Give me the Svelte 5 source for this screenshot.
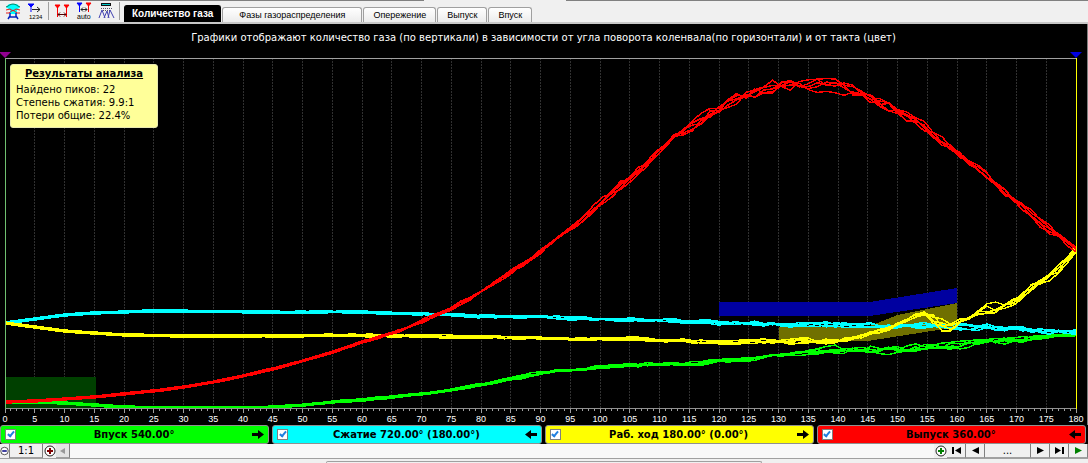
<script>
	const tabs = ["Количество газа", "Фазы газораспределения", "Опережение", "Выпуск", "Впуск"];
	let active = $state(0);

	let strokes = $state([
		{ label: "Впуск 540.00°", color: "#00ff00", dir: "right", on: true },
		{ label: "Сжатие 720.00° (180.00°)", color: "#00ffff", dir: "left", on: true },
		{ label: "Раб. ход 180.00° (0.00°)", color: "#ffff00", dir: "right", on: true },
		{ label: "Выпуск 360.00°", color: "#ff0000", dir: "left", on: true }
	]);

	// [crank angle, height on the 351-unit plot]
	const curves = [
		[[0, 344], [5, 344], [10, 345], [15, 347], [20, 349], [25, 350], [40, 350], [45, 349], [50, 347], [55, 344], [60, 342], [65, 339], [70, 336], [75, 332], [80, 327], [85, 321], [90, 315], [95, 312], [100, 309], [105, 307], [110, 306], [117, 305], [120, 302], [125, 301], [130, 297], [135, 294], [140, 292], [145, 292], [150, 291], [155, 289], [160, 287], [165, 284], [170, 282], [175, 278], [180, 276]],
		[[0, 265], [5, 261], [10, 257], [15, 255], [20, 254], [25, 253], [45, 254], [58, 254], [70, 256], [80, 258], [90, 259], [100, 261], [110, 262], [117, 264], [120, 265], [125, 265], [130, 266], [140, 267], [150, 268], [160, 268], [165, 269], [170, 270], [175, 273], [180, 274]],
		[[0, 265], [5, 269], [10, 273], [15, 275], [20, 277], [30, 278], [45, 278], [58, 277], [70, 278], [80, 279], [90, 280], [100, 281], [110, 282], [120, 284], [125, 283], [130, 284], [135, 283], [140, 283], [145, 277], [150, 266], [154, 255], [156, 261], [158, 266], [160, 264], [162, 259], [164, 251], [167, 249], [169, 244], [171, 237], [173, 229], [175, 221], [177, 211], [179, 198], [180, 191]],
		[[0, 344], [5, 343], [10, 341], [15, 339], [20, 336], [25, 333], [30, 329], [35, 324], [40, 318], [45, 311], [50, 303], [55, 294], [60, 284], [65, 275], [70, 264], [75, 250], [80, 234], [85, 214], [90, 194], [95, 172], [100, 145], [105, 121], [110, 93], [115, 68], [120, 51], [125, 37], [130, 27], [135, 26], [140, 29], [145, 39], [150, 53], [155, 71], [160, 95], [165, 118], [170, 144], [175, 169], [180, 191]]
	];

	// how far the cycles drift apart at a given angle
	const spread = [
		[[0, 0], [70, 1], [90, 3], [130, 4], [145, 9], [165, 7], [180, 4]],
		[[0, 0], [60, 1], [110, 3], [135, 5], [160, 6], [175, 8], [180, 4]],
		[[0, 0], [60, 1], [110, 4], [138, 6], [148, 6], [154, 5], [157, 20], [160, 10], [170, 13], [180, 8]],
		[[0, 0], [60, 1], [80, 5], [100, 9], [120, 13], [135, 15], [150, 12], [165, 8], [175, 12], [180, 5]]
	];

	function at(points, x) {
		const i = Math.max(1, points.findIndex((p) => p[0] >= x));
		const [x0, y0] = points[i - 1];
		const [x1, y1] = points[i];
		return y0 + ((y1 - y0) * (x - x0)) / (x1 - x0);
	}

	// mulberry32
	function random(seed) {
		return () => {
			seed = (seed + 0x6d2b79f5) | 0;
			let t = Math.imul(seed ^ (seed >>> 15), 1 | seed);
			t = (t + Math.imul(t ^ (t >>> 7), 61 | t)) ^ t;
			return ((t ^ (t >>> 14)) >>> 0) / 4294967296;
		};
	}

	function trace(c, k) {
		const next = random(c * 100 + k + 7);
		const out = [];
		let drift = 0;
		for (let x = 0; x <= 180; x += 1.5) {
			drift = drift * 0.4 + (next() - 0.5) * 0.8;
			const y = at(curves[c], x) + drift * at(spread[c], x) + (k - 2) * 0.5;
			out.push(`${x},${Math.min(350, y).toFixed(1)}`);
		}
		return out.join(" ");
	}

	const degrees = Array.from({ length: 181 }, (_, i) => i);
	const major = degrees.filter((d) => d % 5 === 0);
</script>

<main>
	<header class="toolbar">
		<div class="tools">
			<button aria-label="Форсунка">
				<svg width="18" height="18" viewBox="0 0 18 18">
					<path d="M5 2h8l3 3-3 3v4H6V8L2 5z" fill="#00ffff" />
					<path d="M2 5c3-1 4-3 7-3s4 2 7 3" fill="none" stroke="#008060" />
					<path d="M2 8l4-1 3 2 3-2 4 1M2 11l3 0 4-3 4 3 3 0" fill="none" stroke="#e02020" />
					<path d="M6 11v3l-2 3M12 11v3l2 3M6 15h6" fill="none" stroke="#0020c0" stroke-width="1.5" />
				</svg>
			</button>
			<button aria-label="Нумерация">
				<svg width="18" height="18" viewBox="0 0 18 18">
					<path d="M2 2h6L5 5z" fill="#0000ff" stroke="#0000ff" />
					<path d="M5 4v6" stroke="#0000ff" />
					<path d="M6 7.500h8M11 5l3 2.500-3 2.500" fill="none" stroke="#222" />
					<text x="3" y="17" font-size="6">1234</text>
				</svg>
			</button>
			<i></i>
			<button aria-label="Интервал">
				<svg width="18" height="18" viewBox="0 0 18 18">
					<path d="M2 3h5L4.500 6zM11 3h5l-2.500 3z" fill="#f00" stroke="#f00" />
					<path d="M4.500 5v10M13.500 5v10" stroke="#f00" />
					<path d="M5 12.500h8M7 10.500l-2 2 2 2M11 10.500l2 2-2 2" fill="none" stroke="#500" />
				</svg>
			</button>
			<button aria-label="Авто">
				<svg width="18" height="18" viewBox="0 0 18 18">
					<path d="M2 1h5L4.500 4z" fill="#00f" stroke="#00f" />
					<path d="M11 1h5l-2.500 3z" fill="#f00" stroke="#f00" />
					<path d="M4.500 3v7" stroke="#00f" />
					<path d="M13.500 3v7" stroke="#f00" />
					<path d="M6 7.500h6M8 5.500l-2 2 2 2M10 5.500l2 2-2 2" fill="none" stroke="#222" />
					<text x="2" y="17" font-size="7">auto</text>
				</svg>
			</button>
			<button aria-label="Пики">
				<svg width="18" height="18" viewBox="0 0 18 18">
					<path d="M4 2.500h10" stroke="#111" stroke-width="3" />
					<path d="M5 2.500h8" stroke="#00c8c8" />
					<path d="M4 6.500h11M6 8.500h8" stroke="#556" stroke-dasharray="1 1" />
					<path d="M2 16l3-8 3 8M7 16l3-7 2 7M11 16l2-8 4 8" fill="none" stroke="#4040b0" />
				</svg>
			</button>
			<i></i>
		</div>
		<nav role="tablist">
			{#each tabs as tab, i}
				<button role="tab" aria-selected={active === i} class:active={active === i} onclick={() => (active = i)}>{tab}</button>
			{/each}
		</nav>
	</header>

	<section class="chart">
		<h1>Графики отображают количество газа (по вертикали) в зависимости от угла поворота коленвала(по горизонтали) и от такта (цвет)</h1>
		<div class="markers">
			<svg width="12" height="6" viewBox="0 0 12 6"><path d="M0 0h12L6 6z" fill="#900090" /></svg>
			<svg width="12" height="6" viewBox="0 0 12 6"><path d="M0 0h12L6 6z" fill="#0000e0" /></svg>
		</div>
		<div class="plot">
			<svg viewBox="0 0 180 351" preserveAspectRatio="none" shape-rendering="crispEdges">
				{#each major as d}
					<line class="grid" x1={d} x2={d} y1="0" y2="350" />
				{/each}
				<path d="M0 318.500H15.300V350H0z" fill="#004000" />
				<path d="M130 269H145L150 257L160 245V269L145 283H130z" fill="#707000" />
				<path d="M120 244H145.300L160 230V245L145.300 258H120z" fill="#0000a0" />
				{#each strokes as stroke, c}
					{#if stroke.on}
						{#each [0, 1, 2, 3, 4] as k}
							<polyline points={trace(c, k)} stroke={stroke.color} />
						{/each}
					{/if}
				{/each}
				<line x1="0" x2="180" y1="0.500" y2="0.500" stroke="#a0a0a0" />
				<line x1="0" x2="180" y1="350.500" y2="350.500" stroke="#909090" />
				<line x1="0" x2="0" y1="0" y2="351" stroke="#70c070" />
				<line x1="180" x2="180" y1="0" y2="351" stroke="#ffff00" />
			</svg>
			<aside>
				<h2>Результаты анализа</h2>
				<p>Найдено пиков: 22</p>
				<p>Степень сжатия: 9.9:1</p>
				<p>Потери общие: 22.4%</p>
			</aside>
		</div>
		<svg class="ticks" viewBox="0 0 180 5" preserveAspectRatio="none" shape-rendering="crispEdges">
			{#each degrees as d}
				<line x1={d} x2={d} y1="0" y2={d % 5 ? 2 : 4} />
			{/each}
		</svg>
		<div class="labels">
			{#each major as d}
				<span>{d}</span>
			{/each}
		</div>
	</section>

	<div class="legend">
		{#each strokes as stroke}
			<label style:background={stroke.color}>
				<input type="checkbox" bind:checked={stroke.on} />
				<span>{stroke.label}</span>
				<svg class={stroke.dir} width="12" height="9" viewBox="0 0 12 9"><path d="M0 3h6V0l6 4.500L6 9V6H0z" /></svg>
			</label>
		{/each}
	</div>

	<div class="scroller">
		<button class="round cut" aria-label="Уменьшить">
			<svg width="12" height="12" viewBox="0 0 12 12"><circle cx="6" cy="6" r="5" fill="#fff" stroke="#222" /><path d="M3 6h6" stroke="#000080" stroke-width="2" /></svg>
		</button>
		<button class="scale">1:1</button>
		<button class="round" aria-label="Увеличить">
			<svg width="12" height="12" viewBox="0 0 12 12"><circle cx="6" cy="6" r="5" fill="#fff" stroke="#222" /><path d="M3 6h6M6 3v6" stroke="#800000" stroke-width="2" /></svg>
		</button>
		<button class="back" aria-label="Прокрутить назад">
			<svg width="5" height="6" viewBox="0 0 5 6"><path d="M5 0v6L0 3z" fill="#999" /></svg>
		</button>
		<div class="track"></div>
		<button class="round" aria-label="Добавить">
			<svg width="12" height="12" viewBox="0 0 12 12"><circle cx="6" cy="6" r="5" fill="#fff" stroke="#222" /><path d="M3 6h6M6 3v6" stroke="#008000" stroke-width="2" /></svg>
		</button>
		<button aria-label="В начало">
			<svg width="9" height="7" viewBox="0 0 9 7"><path d="M0 0h2v7H0zM9 0v7L3 3.500z" /></svg>
		</button>
		<button aria-label="Назад">
			<svg width="7" height="7" viewBox="0 0 7 7"><path d="M7 0v7L0 3.500z" /></svg>
		</button>
		<button class="more">...</button>
		<button aria-label="Вперёд">
			<svg width="7" height="7" viewBox="0 0 7 7"><path d="M0 0v7l7-3.500z" /></svg>
		</button>
		<button aria-label="В конец">
			<svg width="9" height="7" viewBox="0 0 9 7"><path d="M7 0h2v7H7zM0 0v7l6-3.500z" /></svg>
		</button>
		<button aria-label="Пуск">
			<svg width="7" height="7" viewBox="0 0 7 7"><path d="M0 0v7l7-3.500z" fill="#008000" /></svg>
		</button>
	</div>
	<footer><div></div></footer>
</main>

<style>
	:global(body) { margin: 0; }

	main {
		display: flex;
		flex-direction: column;
		min-height: 100vh;
		overflow: hidden;
		background: #f0f0f0;
		color: #000;
		font-family: "DejaVu Sans", Verdana, sans-serif;
		font-size: 10px;
	}

	button {
		padding: 0;
		border: 0;
		background: none;
		color: inherit;
		font: inherit;
	}

	svg { display: block; }

	.toolbar {
		display: flex;
		height: 22px;
		border-bottom: 2px solid #c8c8c8;
		background: linear-gradient(to right, #808080 39%, #f0f0f0 39%, #f0f0f0 52%, #808080 52%) top / 100% 1px no-repeat;
	}

	.tools {
		display: flex;
		align-items: center;
		gap: 4px;
		width: 124px;
		box-sizing: border-box;
		padding-left: 4px;
	}

	.tools i {
		width: 1px;
		height: 18px;
		background: #a0a0a0;
	}

	.tools text { font-family: "Liberation Sans", Arial, sans-serif; }

	nav {
		display: flex;
		align-items: flex-end;
		gap: 1px;
	}

	nav button {
		height: 15px;
		padding: 0 16px;
		border: 1px solid #a0a0a0;
		border-bottom: 0;
		border-radius: 3px 3px 0 0;
		background: linear-gradient(#fff, #ececec);
		font: 9px/14px "Liberation Sans", Arial, sans-serif;
		white-space: nowrap;
	}

	nav button:nth-child(n + 3) { padding: 0 9px; }

	nav .active {
		height: 17px;
		padding: 0 7px;
		border-color: #000;
		background: #000;
		color: #fff;
		font-size: 10px;
		font-weight: 700;
	}

	.chart {
		display: flex;
		flex: 1;
		flex-direction: column;
		border-right: 1px solid #808080;
		background: #000;
		color: #fff;
	}

	h1 {
		height: 28px;
		margin: 0;
		font-size: 10px;
		font-weight: 400;
		line-height: 28px;
		text-align: center;
		white-space: nowrap;
	}

	.markers {
		display: flex;
		justify-content: space-between;
		margin: 0 5px 0 -1px;
	}

	.plot {
		position: relative;
		flex: 1 0 300px;
		margin: 0 11px 0 5px;
	}

	.plot > svg {
		position: absolute;
		inset: 0;
		width: 100%;
		height: 100%;
		overflow: visible;
	}

	.plot line,
	polyline,
	.ticks line { vector-effect: non-scaling-stroke; }

	.grid {
		stroke: #303030;
		stroke-dasharray: 2 1;
	}

	polyline {
		fill: none;
		stroke-width: 1.5px;
	}

	aside {
		position: absolute;
		top: 6px;
		left: 5px;
		width: 136px;
		padding: 2px 5px 5px;
		border: 1px solid #e8e8b0;
		border-radius: 3px;
		background: #ffff99;
		color: #000;
		line-height: 13px;
	}

	h2 {
		margin: 0 0 3px;
		font-size: 10px;
		line-height: 13px;
		text-align: center;
		text-decoration: underline;
		white-space: nowrap;
	}

	p {
		margin: 0;
		white-space: nowrap;
	}

	.ticks {
		width: calc(100% - 16px);
		height: 5px;
		margin-left: 5px;
		overflow: visible;
	}

	.ticks line { stroke: #a0a0a0; }

	.labels {
		display: flex;
		justify-content: space-between;
		height: 11px;
		margin: 0 11px 0 5px;
		font: 9px/11px "Liberation Sans", Arial, sans-serif;
	}

	.labels span {
		display: flex;
		justify-content: center;
		width: 0;
	}

	.legend {
		display: flex;
		gap: 3px;
		height: 19px;
		padding-right: 2px;
		background: #000;
	}

	.legend label {
		display: flex;
		flex: 1 1 0;
		align-items: center;
		padding: 0 4px;
		border: 1px solid #909090;
		border-radius: 3px;
		font-weight: 700;
	}

	.legend span {
		flex: 1;
		text-align: center;
		white-space: nowrap;
	}

	.legend .left { transform: scaleX(-1); }

	input {
		width: 11px;
		height: 11px;
		margin: 0;
		border: 1px solid #808080;
		background: #fff;
		appearance: none;
	}

	input:checked::after {
		display: block;
		width: 2px;
		height: 5px;
		margin: 0 auto;
		border: solid #2080e0;
		border-width: 0 2px 2px 0;
		content: "";
		rotate: 40deg;
	}

	.scroller {
		display: flex;
		height: 14px;
		border-bottom: 1px solid #a0a0a0;
		background: #f0f0f0;
	}

	.scroller button {
		display: flex;
		align-items: center;
		justify-content: center;
		width: 19px;
		box-sizing: border-box;
		border-right: 1px solid #808080;
		border-bottom: 1px solid #a0a0a0;
	}

	.scroller .round {
		width: 13px;
		border: 0;
	}

	.scroller .cut {
		width: 10px;
		justify-content: flex-end;
		border-right: 1px solid #808080;
	}

	.scroller .scale { width: 33px; }
	.scroller .back { width: 14px; background: #e4e4e4; }
	.scroller .more { width: 46px; }

	.track {
		flex: 1;
		background: #f8f8f8;
	}

	footer {
		height: 2px;
		padding-top: 2px;
	}

	footer div {
		width: 40%;
		height: 2px;
		margin-left: 30%;
		box-sizing: border-box;
		border: 1px solid #a0a0a0;
		border-bottom: 0;
		border-radius: 2px 2px 0 0;
	}
</style>
